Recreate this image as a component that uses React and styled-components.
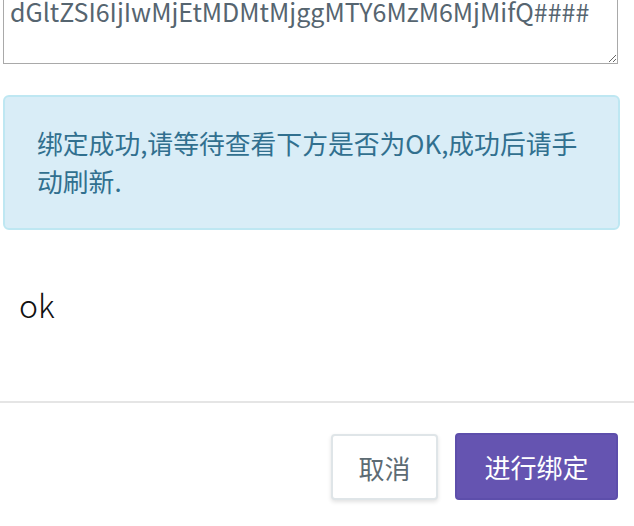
import styled, { createGlobalStyle } from 'styled-components';

const GlobalStyle = createGlobalStyle`
  html, body {
    margin: 0;
    padding: 0;
    background: #ffffff;
    overflow: hidden;
  }
  body {
    font-family: "Noto Sans CJK SC", "Noto Sans", sans-serif;
  }
`;

const Modal = styled.div`
  width: 634px;
  height: 526px;
  display: flex;
  flex-direction: column;
  overflow: hidden;
`;

const ModalBody = styled.div`
  display: flex;
  flex-direction: column;
  padding: 0 15px 0 3px;
  margin-top: -59px;
`;

const TokenField = styled.textarea`
  box-sizing: border-box;
  width: 615px;
  height: 123px;
  margin: 0;
  padding: 6px 6px;
  border: 1px solid #a9a9a9;
  border-radius: 0;
  font-family: "Noto Sans CJK SC", "Noto Sans", sans-serif;
  font-size: 25px;
  line-height: 42px;
  color: #566570;
  background: #fff;
  resize: vertical;
  outline: none;
  overflow: hidden;
  white-space: pre;
`;

const Alert = styled.div`
  box-sizing: border-box;
  width: 617px;
  margin-top: 31px;
  padding: 27px 32px 28px;
  background: #d9edf7;
  border: 2px solid #bee7f2;
  border-radius: 6px;
  color: #31708f;
`;

const AlertText = styled.p`
  margin: 0;
  max-width: 545px;
  font-size: 25.8px;
  line-height: 38px;
`;

const Result = styled.div`
  padding: 54px 0 0 16px;
  height: 117px;
  font-size: 32px;
  font-weight: 300;
  line-height: 40px;
  color: #111;
`;

const Footer = styled.div`
  margin-top: auto;
  border-top: 2px solid #e5e5e5;
  display: flex;
  justify-content: flex-end;
  align-items: center;
  gap: 17px;
  padding: 30px 16px 26px;
`;

const Button = styled.button`
  box-sizing: border-box;
  height: ${p => (p.$primary ? '67px' : '66px')};
  padding: 0 ${p => (p.$primary ? '27.5px' : '25.5px')};
  font-family: "Noto Sans CJK SC", "Noto Sans", sans-serif;
  font-size: 26px;
  border-radius: 4px;
  cursor: pointer;
  border: 2px solid ${p => (p.$primary ? '#5d4eab' : '#dfe5e8')};
  background: ${p => (p.$primary ? '#6554b1' : '#ffffff')};
  color: ${p => (p.$primary ? '#ffffff' : '#5d6b73')};
  box-shadow: ${p => (p.$primary ? 'none' : '0 2px 4px rgba(0, 0, 0, 0.12)')};
  align-self: ${p => (p.$primary ? 'flex-start' : 'flex-end')};
`;

export default function App() {
  return (
    <Modal>
      <GlobalStyle />
      <ModalBody>
        <TokenField
          readOnly
          defaultValue={'eyJ1c2VyIjoiYWRtaW4i\ndGltZSI6IjIwMjEtMDMtMjggMTY6MzM6MjMifQ####'}
        />
        <Alert>
          <AlertText>绑定成功,请等待查看下方是否为OK,成功后请手动刷新.</AlertText>
        </Alert>
        <Result>ok</Result>
      </ModalBody>
      <Footer>
        <Button>取消</Button>
        <Button $primary>进行绑定</Button>
      </Footer>
    </Modal>
  );
}
